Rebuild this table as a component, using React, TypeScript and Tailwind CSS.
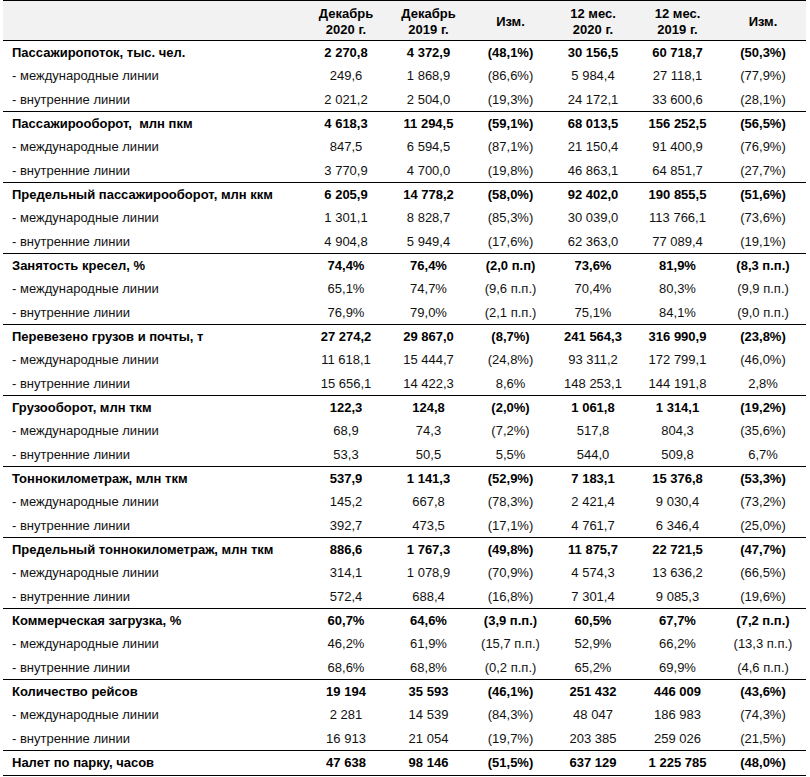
import React from "react";

type Row = [string, string, string, string, string, string, string];

interface Group {
  main: Row;
  subs: Row[];
}

const MI = "- международные линии";
const VN = "- внутренние линии";

const groups: Group[] = [
  {
    main: ["Пассажиропоток, тыс. чел.", "2 270,8", "4 372,9", "(48,1%)", "30 156,5", "60 718,7", "(50,3%)"],
    subs: [
      [MI, "249,6", "1 868,9", "(86,6%)", "5 984,4", "27 118,1", "(77,9%)"],
      [VN, "2 021,2", "2 504,0", "(19,3%)", "24 172,1", "33 600,6", "(28,1%)"],
    ],
  },
  {
    main: ["Пассажирооборот,  млн пкм", "4 618,3", "11 294,5", "(59,1%)", "68 013,5", "156 252,5", "(56,5%)"],
    subs: [
      [MI, "847,5", "6 594,5", "(87,1%)", "21 150,4", "91 400,9", "(76,9%)"],
      [VN, "3 770,9", "4 700,0", "(19,8%)", "46 863,1", "64 851,7", "(27,7%)"],
    ],
  },
  {
    main: ["Предельный пассажирооборот, млн ккм", "6 205,9", "14 778,2", "(58,0%)", "92 402,0", "190 855,5", "(51,6%)"],
    subs: [
      [MI, "1 301,1", "8 828,7", "(85,3%)", "30 039,0", "113 766,1", "(73,6%)"],
      [VN, "4 904,8", "5 949,4", "(17,6%)", "62 363,0", "77 089,4", "(19,1%)"],
    ],
  },
  {
    main: ["Занятость кресел, %", "74,4%", "76,4%", "(2,0 п.п)", "73,6%", "81,9%", "(8,3 п.п.)"],
    subs: [
      [MI, "65,1%", "74,7%", "(9,6 п.п.)", "70,4%", "80,3%", "(9,9 п.п.)"],
      [VN, "76,9%", "79,0%", "(2,1 п.п.)", "75,1%", "84,1%", "(9,0 п.п.)"],
    ],
  },
  {
    main: ["Перевезено грузов и почты, т", "27 274,2", "29 867,0", "(8,7%)", "241 564,3", "316 990,9", "(23,8%)"],
    subs: [
      [MI, "11 618,1", "15 444,7", "(24,8%)", "93 311,2", "172 799,1", "(46,0%)"],
      [VN, "15 656,1", "14 422,3", "8,6%", "148 253,1", "144 191,8", "2,8%"],
    ],
  },
  {
    main: ["Грузооборот, млн ткм", "122,3", "124,8", "(2,0%)", "1 061,8", "1 314,1", "(19,2%)"],
    subs: [
      [MI, "68,9", "74,3", "(7,2%)", "517,8", "804,3", "(35,6%)"],
      [VN, "53,3", "50,5", "5,5%", "544,0", "509,8", "6,7%"],
    ],
  },
  {
    main: ["Тоннокилометраж, млн ткм", "537,9", "1 141,3", "(52,9%)", "7 183,1", "15 376,8", "(53,3%)"],
    subs: [
      [MI, "145,2", "667,8", "(78,3%)", "2 421,4", "9 030,4", "(73,2%)"],
      [VN, "392,7", "473,5", "(17,1%)", "4 761,7", "6 346,4", "(25,0%)"],
    ],
  },
  {
    main: ["Предельный тоннокилометраж, млн ткм", "886,6", "1 767,3", "(49,8%)", "11 875,7", "22 721,5", "(47,7%)"],
    subs: [
      [MI, "314,1", "1 078,9", "(70,9%)", "4 574,3", "13 636,2", "(66,5%)"],
      [VN, "572,4", "688,4", "(16,8%)", "7 301,4", "9 085,3", "(19,6%)"],
    ],
  },
  {
    main: ["Коммерческая загрузка, %", "60,7%", "64,6%", "(3,9 п.п.)", "60,5%", "67,7%", "(7,2 п.п.)"],
    subs: [
      [MI, "46,2%", "61,9%", "(15,7 п.п.)", "52,9%", "66,2%", "(13,3 п.п.)"],
      [VN, "68,6%", "68,8%", "(0,2 п.п.)", "65,2%", "69,9%", "(4,6 п.п.)"],
    ],
  },
  {
    main: ["Количество рейсов", "19 194", "35 593", "(46,1%)", "251 432", "446 009", "(43,6%)"],
    subs: [
      [MI, "2 281", "14 539", "(84,3%)", "48 047", "186 983", "(74,3%)"],
      [VN, "16 913", "21 054", "(19,7%)", "203 385", "259 026", "(21,5%)"],
    ],
  },
];

const lastRow: Row = ["Налет по парку, часов", "47 638", "98 146", "(51,5%)", "637 129", "1 225 785", "(48,0%)"];

const colWidths = ["w-[302px]", "w-[82px]", "w-[83px]", "w-[81px]", "w-[84px]", "w-[85px]", "w-[86px]"];

function TableRow({ row, bold, height }: { row: Row; bold?: boolean; height: string }) {
  return (
    <div className={`flex items-center ${height} ${bold ? "font-bold text-black" : "text-[#111]"}`}>
      {row.map((cell, i) => (
        <div
          key={i}
          className={`${colWidths[i]} shrink-0 whitespace-pre ${i === 0 ? "pl-[9px] text-left" : "text-center"}`}
        >
          {cell}
        </div>
      ))}
    </div>
  );
}

export default function App() {
  const headers = ["", "Декабрь\n2020 г.", "Декабрь\n2019 г.", "Изм.", "12 мес.\n2020 г.", "12 мес.\n2019 г.", "Изм."];

  return (
    <div className="w-[810px] h-[777px] bg-white overflow-hidden">
      <div className="ml-[3px] w-[803px] font-['Liberation_Sans',Arial,sans-serif] text-[13px] leading-[16px]">
        {/* header */}
        <div className="flex items-center h-[41px] pt-[2px] border-t border-b border-black bg-[#f2f2f2] font-bold text-black">
          {headers.map((h, i) => (
            <div key={i} className={`${colWidths[i]} shrink-0 text-center whitespace-pre-line`}>
              {h}
            </div>
          ))}
        </div>

        {groups.map((g, gi) => (
          <div key={gi} className="border-b border-black">
            <TableRow row={g.main} bold height="h-[23px]" />
            <TableRow row={g.subs[0]} height="h-[24px]" />
            <TableRow row={g.subs[1]} height="h-[23px]" />
          </div>
        ))}

        <div className="border-b border-black">
          <TableRow row={lastRow} bold height="h-[24px]" />
        </div>
      </div>
    </div>
  );
}
